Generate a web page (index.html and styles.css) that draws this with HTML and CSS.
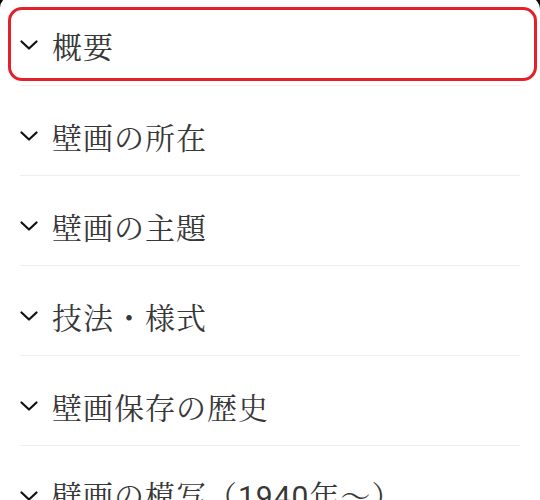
FILE: index.html
```html
<!DOCTYPE html>
<html lang="ja">
<head>
  <meta charset="UTF-8">
  <meta name="viewport" content="width=device-width, initial-scale=1.0">
  <title>目次</title>
  <link rel="stylesheet" href="styles.css">
</head>
<body>
  <div class="sheet">
    <ul class="toc">
      <li class="toc-item focused">
        <svg class="chevron" viewBox="0 0 18 10"><polyline points="1.5,1.5 9,8.5 16.5,1.5"/></svg>
        <span class="toc-label">概要</span>
      </li>
      <li class="toc-item">
        <svg class="chevron" viewBox="0 0 18 10"><polyline points="1.5,1.5 9,8.5 16.5,1.5"/></svg>
        <span class="toc-label">壁画の所在</span>
      </li>
      <li class="toc-item">
        <svg class="chevron" viewBox="0 0 18 10"><polyline points="1.5,1.5 9,8.5 16.5,1.5"/></svg>
        <span class="toc-label">壁画の主題</span>
      </li>
      <li class="toc-item">
        <svg class="chevron" viewBox="0 0 18 10"><polyline points="1.5,1.5 9,8.5 16.5,1.5"/></svg>
        <span class="toc-label">技法・様式</span>
      </li>
      <li class="toc-item">
        <svg class="chevron" viewBox="0 0 18 10"><polyline points="1.5,1.5 9,8.5 16.5,1.5"/></svg>
        <span class="toc-label">壁画保存の歴史</span>
      </li>
      <li class="toc-item">
        <svg class="chevron" viewBox="0 0 18 10"><polyline points="1.5,1.5 9,8.5 16.5,1.5"/></svg>
        <span class="toc-label">壁画の模写（<span class="num">1940</span>年〜）</span>
      </li>
    </ul>
  </div>
</body>
</html>
```

FILE: styles.css
```css
* { margin:0; padding:0; box-sizing:border-box; }
html, body { height:100%; }
body {
  background:#000;
  font-family: "Noto Serif CJK JP", "IPAMincho", "Noto Sans CJK JP", serif;
  color:#383838;
  overflow:hidden;
}
.sheet {
  background:#fff;
  min-height:100%;
  border-radius:12px 14px 0 0;
  padding:0 20px;
  margin-top:-4px;
}
.toc { list-style:none; }
.toc-item {
  display:flex; align-items:center;
  height:90px;
  padding-top:10px;
  border-bottom:1.5px solid #eeeeee;
  position:relative;
}
.toc-item.focused { padding-top:8px; }
.toc-item.focused::after {
  content:''; position:absolute;
  top:11px; bottom:4px; left:-12px; right:-17px;
  border:3px solid #e2212b;
  border-radius:14px;
}
.chevron {
  width:18px; height:10px;
  margin-right:14px;
  flex-shrink:0;
}
.chevron polyline {
  fill:none; stroke:#111; stroke-width:2.2;
  stroke-linecap:round; stroke-linejoin:round;
}
.toc-label {
  font-size:30px;
  line-height:36px;
  letter-spacing:1px;
  white-space:nowrap;
}
.num { font-family: Roboto, "Liberation Sans", sans-serif; }
```
